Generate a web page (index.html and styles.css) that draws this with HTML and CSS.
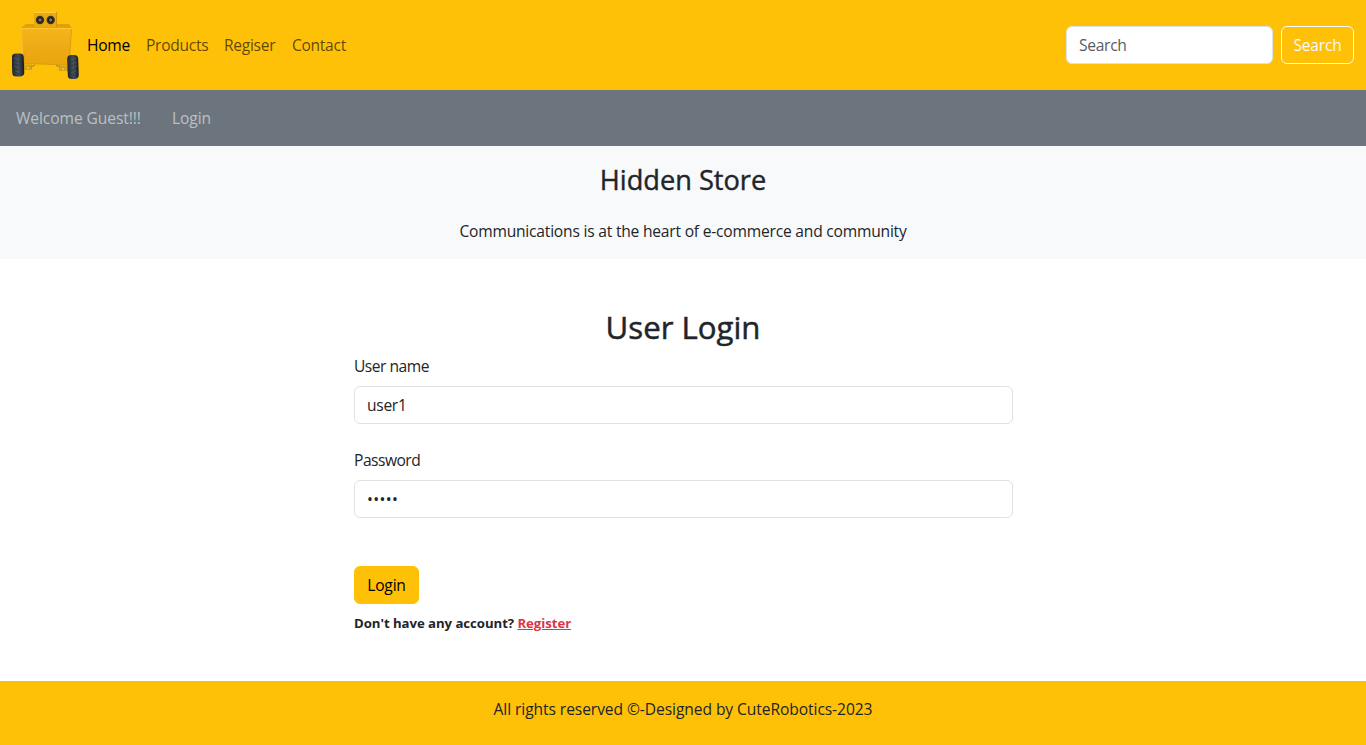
FILE: index.html
```html
<!DOCTYPE html>
<html lang="en">
<head>
<meta charset="utf-8">
<title>User Login</title>
<link rel="stylesheet" href="styles.css">
</head>
<body>
<header class="topbar">
  <svg class="logo" viewBox="0 0 67 70" aria-label="Robot logo">
    <defs>
      <linearGradient id="body" x1="0" y1="0" x2="0" y2="1"><stop offset="0" stop-color="#f6b518"/><stop offset=".5" stop-color="#eeab17"/><stop offset="1" stop-color="#e9a50d"/></linearGradient>
      <linearGradient id="tire" x1="0" y1="0" x2="1" y2="0"><stop offset="0" stop-color="#20262e"/><stop offset=".55" stop-color="#414b55"/><stop offset="1" stop-color="#181c22"/></linearGradient>
    </defs>
    <path d="M24 15h21v4H24z" fill="#d99b08"/>
    <path d="M22 2l1-1.500h22v15l-1 1.500H22z" fill="#eba90f"/>
    <path d="M22 2l1-1.500h22l-1 1.500z" fill="#ffce3d"/>
    <path d="M44.600 1v15" stroke="#c98b07" stroke-width=".8"/>
    <circle cx="28" cy="9" r="4.200" fill="#38332c"/><circle cx="38.700" cy="9" r="4.200" fill="#38332c"/>
    <circle cx="28" cy="9" r="2.200" fill="#77736a" stroke="#111" stroke-width="1"/><circle cx="38.700" cy="9" r="2.200" fill="#77736a" stroke="#111" stroke-width="1"/>
    <path d="M9 17l5-4h8v3h23v-3h12l3 4z" fill="#dfa00a"/>
    <path d="M8.500 17H60l-3 37-46-1.500z" fill="url(#body)"/>
    <path d="M8.500 17.400H60" stroke="#ffc934" stroke-width="1"/>
    <path d="M59.500 18l-2.500 36M11 52.500l46 1.500" stroke="#d19510" stroke-width=".7"/>
    <path d="M9 17l2.500 36" stroke="#f8c839" stroke-width=".8"/>
    <path d="M12 53.500h8v5.500h-7zM47 54.500h9v5.500h-9z" fill="#d8a512"/>
    <circle cx="16" cy="57" r=".8" fill="#ffdf5d"/><circle cx="51" cy="58" r=".8" fill="#ffdf5d"/>
    <path d="M19 56l4-2M44 54.500l4 1" stroke="#96803c" stroke-width="1"/>
    <path d="M9 43h4v16H9zM55 45h4v16h-4z" fill="#dda00c"/>
    <rect x="0" y="42.500" width="12" height="23" rx="4" fill="url(#tire)" transform="rotate(-2 6 54)"/>
    <rect x="55.500" y="44" width="11" height="24" rx="4" fill="url(#tire)" transform="rotate(-2 61 56)"/>
    <path d="M2 47l5 2M2 51l5 2M2 55l5 2M3 60l5 1M59 49l6-2M59 53l6-2M59 57l6-2M59 62l5-2" stroke="#59636c" stroke-width=".6"/>
  </svg>
  <nav class="menu">
    <a class="home">Home</a><a class="products">Products</a><a class="register">Regiser</a><a class="contact">Contact</a>
  </nav>
  <form class="search">
    <input class="control search-input" type="search" placeholder="Search" aria-label="Search">
    <button class="btn search-btn" type="button">Search</button>
  </form>
</header>
<nav class="userbar"><a class="welcome">Welcome Guest!!!</a><a class="signin">Login</a></nav>
<section class="hero">
  <h3 class="store">Hidden Store</h3>
  <p class="tagline">Communications is at the heart of e-commerce and community</p>
</section>
<main class="login">
  <h2 class="title">User Login</h2>
  <form class="form">
    <label class="label" for="username">User name</label>
    <input class="control field" id="username" value="user1">
    <label class="label label-password" for="password">Password</label>
    <input class="control field password" id="password" type="password" value="12345">
    <button class="btn login-btn" type="button">Login</button>
    <p class="account">Don't have any account? <a class="link">Register</a></p>
  </form>
</main>
<footer class="footer"><p class="rights">All rights reserved ©-Designed by CuteRobotics-2023</p></footer>
</body>
</html>
```
FILE: styles.css
```css
* { box-sizing: border-box; }
body { margin: 0; background: #fff; color: #212529; font: 400 15.6px/24px "Open Sans", "Noto Sans", sans-serif; letter-spacing: -.25px; }
h2, h3, p { margin: 0; font-weight: 500; }
a, button, label { white-space: nowrap; }
.topbar { display: flex; align-items: center; height: 90px; padding: 0 12px; background: #ffc107; }
.logo { width: 67px; height: 70px; flex: none; margin-top: 2px; }
.menu { display: flex; gap: 16px; margin-left: 8px; color: rgba(0,0,0,.65); letter-spacing: -.3px; }
.home { width: 43px; color: #000; }
.products { width: 62px; }
.register { width: 52px; }
.contact { width: 55px; }
.search { display: flex; gap: 8px; margin-left: auto; }
.control { height: 38px; padding: 6px 12px; border: 1px solid #dee2e6; border-radius: 6px; background: #fff; color: #212529; font: inherit; letter-spacing: -.3px; outline: none; }
.search-input { width: 207px; }
.search-input::placeholder { color: #595c5f; opacity: 1; }
.btn { height: 38px; padding: 0; border: 1px solid #ffc107; border-radius: 6px; background: #ffc107; font: inherit; letter-spacing: -.2px; }
.search-btn { width: 73px; border-color: #f8f9fa; color: #f8f9fa; }
.userbar { display: flex; align-items: center; height: 56px; padding: 0 16px; background: #6c757d; color: rgba(255,255,255,.55); letter-spacing: -.08px; }
.welcome { width: 156px; }
.hero { height: 113px; padding-top: 17px; background: #f8f9fa; text-align: center; }
.store { font-size: 27.2px; line-height: 34px; letter-spacing: 0; -webkit-text-stroke: .4px; }
.tagline { margin-top: 22px; font-weight: 400; letter-spacing: -.21px; }
.login { height: 422px; padding-top: 49px; }
.title { text-align: center; font-size: 31.2px; line-height: 38px; letter-spacing: 0; -webkit-text-stroke: .5px; }
.form { width: 659px; margin: 8px auto 0 354px; }
.label { display: block; letter-spacing: -.5px; }
.label-password { margin-top: 24px; }
.field { display: block; width: 100%; margin-top: 8px; }
.password { letter-spacing: .4px; }
.login-btn { display: block; width: 65px; margin-top: 48px; color: #000; }
.account { margin-top: 7px; font-size: 13.2px; font-weight: 700; letter-spacing: -.05px; }
.link { color: #dc3545; text-decoration: underline; }
.footer { height: 64px; padding-top: 16px; background: #ffc107; text-align: center; }
.rights { font-weight: 400; letter-spacing: -.08px; }
```
